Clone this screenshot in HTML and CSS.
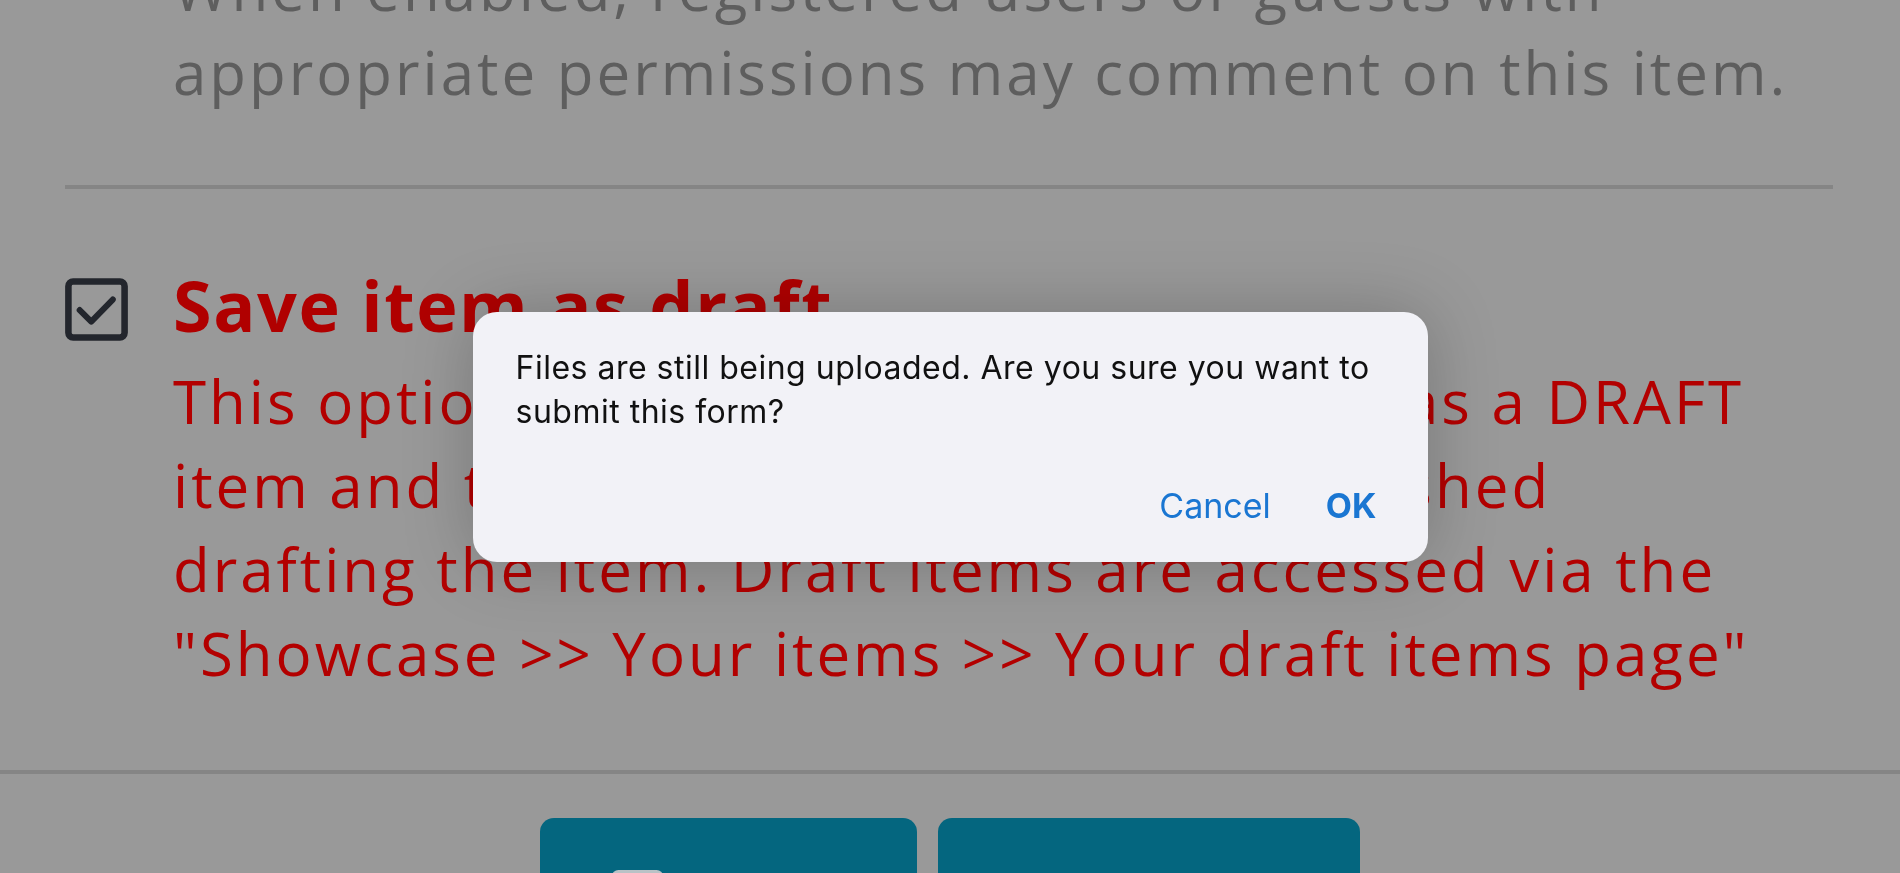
FILE: index.html
```html
<!DOCTYPE html>
<html lang="en">
<head>
    <meta charset="UTF-8">
    <meta name="viewport" content="width=device-width, initial-scale=1.0">
    <title>Edit item</title>
    <link rel="stylesheet" href="styles.css">
</head>
<body>
    <div class="form-options">
        <section class="option option-comments">
            <p class="option-desc muted">When enabled, registered users or guests with<br>appropriate permissions may comment on this item.</p>
        </section>

        <hr class="divider">

        <section class="option option-draft">
            <span class="checkbox">
                <svg viewBox="0 0 24 24" width="63" height="63" fill="none" stroke="#23262d" stroke-linecap="round" stroke-linejoin="round">
                    <rect x="1.3" y="1.3" width="21.4" height="21.4" rx="1.8" stroke-width="2.5"/>
                    <polyline points="5.6,12.2 10,16.6 18.2,8.2" stroke-width="2.3"/>
                </svg>
            </span>
            <div class="option-body">
                <h2 class="option-title">Save item as draft</h2>
                <p class="option-desc">This option allows you to save this item as a DRAFT<br>item and to return to it when you've finished<br>drafting the item. Draft items are accessed via the<br>"Showcase &gt;&gt; Your items &gt;&gt; Your draft items page"</p>
            </div>
        </section>
    </div>

    <div class="form-actions">
        <button type="button" class="btn btn-save">
            <svg viewBox="0 0 24 24" width="51" height="51" fill="#b9c2c6"><rect x="0" y="0" width="24" height="24" rx="3"/></svg>
            <span>Save</span>
        </button>
        <button type="button" class="btn btn-preview"><span>Preview</span></button>
    </div>

    <div class="modal-backdrop">
        <div class="alert" role="alertdialog">
            <p class="alert-message">Files are still being uploaded. Are you sure you want to submit this form?</p>
            <div class="alert-actions">
                <button type="button" class="alert-btn">Cancel</button>
                <button type="button" class="alert-btn alert-btn-ok">OK</button>
            </div>
        </div>
    </div>
</body>
</html>
```

FILE: styles.css
```css
body {
    margin: 0;
    padding: 0;
    height: 873px;
    overflow: hidden;
    background: #999999;
    font-family: "Open Sans", sans-serif;
    color: #5e5e5e;
}

.form-options {
    padding: 0 67px 75px 65px;
    border-bottom: 4px solid #858585;
}

.option-comments {
    margin-top: -54px;
    padding-left: 108px;
}

.option-desc {
    margin: 0;
    font-size: 60px;
    line-height: 84px;
    letter-spacing: 3px;
    white-space: nowrap;
}

.option-desc.muted {
    color: #5e5e5e;
}

.divider {
    margin: 71px 0 0;
    border: none;
    height: 4px;
    background: #858585;
}

.option-draft {
    display: flex;
    gap: 45px;
    margin-top: 74px;
    color: #b00000;
}

.checkbox {
    display: block;
    margin-top: 15px;
    line-height: 0;
}

.option-title {
    margin: 0;
    font-size: 70px;
    line-height: 84px;
    font-weight: 700;
    letter-spacing: 1.6px;
    color: #b00000;
}

.option-draft .option-desc {
    margin-top: 12px;
    color: #b30000;
}

.form-actions {
    display: flex;
    justify-content: center;
    gap: 21px;
    margin-top: 44px;
}

.btn {
    height: 140px;
    border: none;
    border-radius: 14px;
    background: #04667f;
    color: #d7e1e5;
    font-family: "Open Sans", sans-serif;
    font-size: 40px;
    line-height: 51px;
    display: flex;
    align-items: flex-start;
    gap: 16px;
    cursor: pointer;
}

.btn-save {
    width: 377px;
    padding: 52px 0 0 72px;
}

.btn-preview {
    width: 422px;
    justify-content: center;
    padding: 60px 0 0;
}

.modal-backdrop {
    position: fixed;
    inset: 0;
    display: flex;
    justify-content: center;
    align-items: center;
}

.alert {
    width: 955px;
    box-sizing: border-box;
    padding: 34px 51px 34px 43px;
    background: #f2f2f7;
    border-radius: 24px;
    box-shadow: 0 0 70px rgba(0, 0, 0, 0.22);
    font-family: Inter, "Liberation Sans", sans-serif;
}

.alert-message {
    margin: 0;
    font-size: 32px;
    line-height: 44px;
    letter-spacing: 0.5px;
    color: #111;
}

.alert-actions {
    display: flex;
    justify-content: flex-end;
    gap: 55px;
    margin-top: 50px;
}

.alert-btn {
    padding: 0;
    border: none;
    background: none;
    font-family: Inter, "Liberation Sans", sans-serif;
    font-size: 34px;
    line-height: 44px;
    color: #1a76d2;
    cursor: pointer;
}

.alert-btn-ok {
    font-weight: 700;
}
```
